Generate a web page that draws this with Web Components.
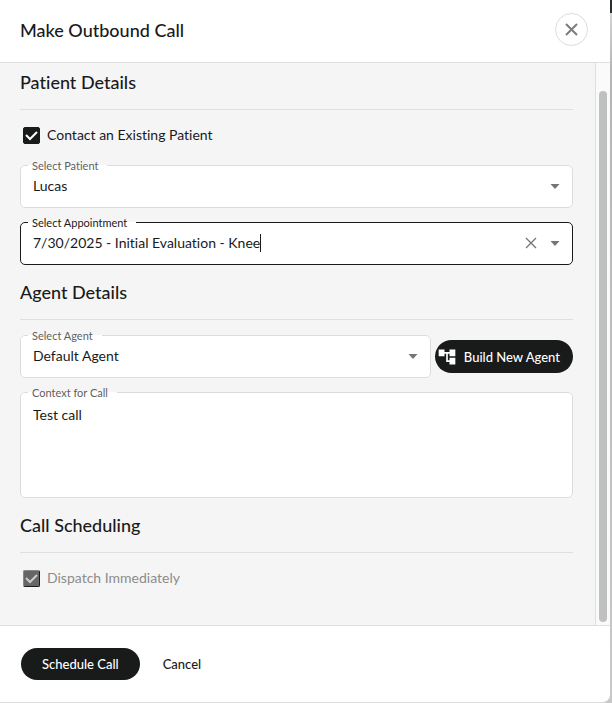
<!DOCTYPE html>
<html lang="en">
<head>
<meta charset="utf-8">
<meta name="viewport" content="width=device-width, initial-scale=1">
<title>Make Outbound Call</title>
<style>
    body {
        margin: 0;
        font-family: Lato, "Liberation Sans", sans-serif;
        font-size: 14px;
        font-variant-ligatures: none;
        color: #191a1a;
        background: linear-gradient(#2b2c2c 13px, #d4d4d4 13px, #b4b4b4 70px, #c8c8c8);
    }
</style>
</head>
<body>

<template id="dialog-template">
    <style>
        :host {
            display: flex;
            flex-direction: column;
            box-sizing: border-box;
            min-height: 100vh;
            margin-right: 2px;
            background: #fff;
            border-bottom: 1px solid #dcdcdc;
            border-radius: 0 0 8px 0;
        }
        header {
            display: flex;
            align-items: center;
            justify-content: space-between;
            padding: 13px 22px 16px 20px;
            border-bottom: 1px solid #dfdfdf;
        }
        h1 {
            margin: 0;
            font-size: 18px;
            line-height: 24px;
            font-weight: 500;
        }
        .close {
            display: grid;
            place-items: center;
            width: 33px;
            height: 33px;
            padding: 0;
            border: 1px solid #dcdcdc;
            border-radius: 50%;
            background: #fff;
            color: #7c7c7c;
        }
        .body {
            flex: 1;
            display: grid;
            grid-template-columns: 1fr 15px;
            background: #f5f5f5;
        }
        main {
            display: flex;
            flex-direction: column;
            gap: 15px;
            padding: 7px 22px 31px 20px;
            min-width: 0;
        }
        .track {
            display: flex;
            justify-content: center;
            padding: 28px 0 3px;
            background: #fafafa;
            border-left: 1px solid #dfdfdf;
        }
        .thumb {
            width: 8px;
            border-radius: 4px;
            background: #bfc0c0;
        }
        footer {
            display: flex;
            gap: 2px;
            padding: 22px 21px;
            border-top: 1px solid #dfdfdf;
        }
    </style>
    <header>
        <h1></h1>
        <button class="close" type="button" aria-label="Close">
            <svg width="13" height="13" viewBox="0 0 13 13" fill="none" stroke="currentColor" stroke-width="2"><path d="M1 1l11 11M12 1L1 12"/></svg>
        </button>
    </header>
    <div class="body">
        <main><slot></slot></main>
        <div class="track"><div class="thumb"></div></div>
    </div>
    <footer><slot name="actions"></slot></footer>
</template>

<template id="section-template">
    <style>
        :host {
            display: flex;
            flex-direction: column;
            gap: 8px;
        }
        h2 {
            margin: 0 0 1px;
            padding-bottom: 15px;
            border-bottom: 1px solid #dfdfdf;
            font-size: 18px;
            line-height: 24px;
            font-weight: 500;
        }
    </style>
    <h2></h2>
    <slot></slot>
</template>

<template id="check-template">
    <style>
        :host {
            display: flex;
            align-items: center;
            gap: 7px;
            height: 32px;
            padding-left: 3px;
        }
        .box {
            display: grid;
        }
        input, svg {
            grid-area: 1 / 1;
            width: 17px;
            height: 17px;
        }
        input {
            appearance: none;
            margin: 0;
            border: 1px solid #191a1a;
            border-radius: 2px;
            background: #fff;
        }
        input:checked {
            background: #191a1a;
        }
        input:disabled {
            border-color: #888 #191a1a #191a1a #888;
            background: #666;
        }
        svg {
            pointer-events: none;
            color: #fff;
        }
        input:not(:checked) + svg {
            visibility: hidden;
        }
        input:disabled + svg {
            color: #ccc;
        }
        label {
            line-height: 20px;
        }
        :host([disabled]) label {
            color: #8c8c8c;
        }
    </style>
    <span class="box">
        <input id="check" type="checkbox">
        <svg viewBox="0 0 17 17" fill="none" stroke="currentColor" stroke-width="2"><path d="M3 8l4 4L14 5"/></svg>
    </span>
    <label for="check"></label>
</template>

<template id="field-template">
    <style>
        :host {
            display: block;
            min-width: 0;
            --line: #dcdcdc;
        }
        :host([active]) {
            --line: #191a1a;
        }
        fieldset {
            display: block;
            min-width: 0;
            margin: 0;
            padding: 0 5px 0 12px;
            border: 1px solid var(--line);
            border-radius: 5px;
            background: #fff;
        }
        legend {
            margin-left: -5px;
            padding: 0 9px 0 4px;
            font-size: 11px;
            line-height: 13px;
            color: #5f6060;
        }
        :host([active]) legend {
            color: #191a1a;
        }
        .row {
            display: grid;
            align-items: center;
            grid-template-columns: 1fr auto;
            padding: 2px 0 9px;
        }
        .row.combo {
            grid-template-columns: auto 1px 1fr auto auto;
        }
        .row.textarea {
            padding: 0;
        }
        select, input, textarea {
            display: block;
            box-sizing: border-box;
            width: 100%;
            margin: 0;
            padding: 0;
            border: 0;
            outline: 0;
            appearance: none;
            background: none;
            font: inherit;
            line-height: 20px;
            color: inherit;
        }
        select {
            grid-area: 1 / 1 / 2 / 3;
        }
        select + svg {
            grid-area: 1 / 2;
            pointer-events: none;
        }
        input {
            field-sizing: content;
            width: auto;
        }
        textarea {
            height: 98px;
            padding-top: 6px;
            resize: none;
        }
        .caret {
            height: 18px;
            background: #191a1a;
        }
        button {
            display: grid;
            place-items: center;
            padding: 0;
            border: 0;
            background: none;
            color: #747575;
        }
        .clear {
            grid-column: 4;
            width: 24px;
            height: 24px;
        }
        .arrow {
            width: 24px;
            height: 24px;
            color: #747575;
        }
    </style>
    <fieldset>
        <legend><label for="control"></label></legend>
        <div class="row"></div>
    </fieldset>
</template>

<template id="button-template">
    <style>
        :host {
            display: block;
            flex: none;
        }
        button {
            display: flex;
            align-items: center;
            gap: 7px;
            height: 32px;
            padding: 0 21px;
            border: 0;
            border-radius: 17px;
            background: #191a1a;
            color: #fff;
            font: inherit;
            font-size: 13px;
            font-weight: 500;
            white-space: nowrap;
        }
        :host([variant="text"]) button {
            background: none;
            color: #191a1a;
        }
        :host([variant="icon"]) button {
            height: 33px;
            padding: 0 13px 0 2px;
        }
    </style>
    <button type="button"><slot name="icon"></slot><slot></slot></button>
</template>

<template id="row-template">
    <style>
        :host {
            display: grid;
            grid-template-columns: 1fr auto;
            align-items: end;
            gap: 4px;
        }
        .side {
            padding-bottom: 5px;
        }
    </style>
    <slot></slot>
    <div class="side"><slot name="side"></slot></div>
</template>

<call-dialog heading="Make Outbound Call">
    <form-section heading="Patient Details">
        <check-field label="Contact an Existing Patient" checked></check-field>
        <outlined-field label="Select Patient" value="Lucas"></outlined-field>
        <outlined-field label="Select Appointment" type="combo" value="7/30/2025 - Initial Evaluation - Knee" active></outlined-field>
    </form-section>
    <form-section heading="Agent Details">
        <field-row>
            <outlined-field label="Select Agent" value="Default Agent"></outlined-field>
            <pill-button slot="side" variant="icon">
                <svg slot="icon" width="20" height="20" viewBox="0 0 24 24" fill="currentColor"><path d="M22 11V3h-7v3H9V3H2v8h7V8h2v10h4v3h7v-8h-7v3h-2V8h2v3z"/></svg>Build New Agent</pill-button>
        </field-row>
        <outlined-field label="Context for Call" type="textarea" value="Test call"></outlined-field>
    </form-section>
    <form-section heading="Call Scheduling">
        <check-field label="Dispatch Immediately" checked disabled></check-field>
    </form-section>
    <pill-button slot="actions">Schedule Call</pill-button>
    <pill-button slot="actions" variant="text">Cancel</pill-button>
</call-dialog>

<script>
    class TemplateElement extends HTMLElement {
        constructor(id) {
            super()
            this.attachShadow({ mode: "open" })
            const template = document.querySelector(id)
            this.shadowRoot.appendChild(template.content.cloneNode(true))
        }
        find(selector) {
            return this.shadowRoot.querySelector(selector)
        }
    }

    customElements.define("call-dialog",
        class CallDialog extends TemplateElement {
            constructor() {
                super("#dialog-template")
            }
            connectedCallback() {
                this.find("h1").textContent = this.getAttribute("heading")
                this.find(".close").addEventListener("click", () => {
                    this.dispatchEvent(new Event("close"))
                })
            }
        }
    )

    customElements.define("form-section",
        class FormSection extends TemplateElement {
            constructor() {
                super("#section-template")
            }
            connectedCallback() {
                this.find("h2").textContent = this.getAttribute("heading")
            }
        }
    )

    customElements.define("field-row",
        class FieldRow extends TemplateElement {
            constructor() {
                super("#row-template")
            }
        }
    )

    customElements.define("check-field",
        class CheckField extends TemplateElement {
            constructor() {
                super("#check-template")
            }
            connectedCallback() {
                const input = this.find("input")
                input.checked = this.hasAttribute("checked")
                input.disabled = this.hasAttribute("disabled")
                this.find("label").textContent = this.getAttribute("label")
            }
        }
    )

    const arrow = `<svg class="arrow" viewBox="0 0 24 24" fill="currentColor"><path d="M7.500 10h9L12 15z"/></svg>`

    const controls = {
        select: `<select id="control"><option></option></select>${arrow}`,
        combo: `
            <input id="control" type="text" autocomplete="off">
            <span class="caret"></span>
            <button class="clear" type="button" aria-label="Clear">
                <svg width="12" height="12" viewBox="0 0 12 12" fill="none" stroke="currentColor" stroke-width="1.300"><path d="M1 1l10 10M11 1L1 11"/></svg>
            </button>
            <button class="open" type="button" aria-label="Open">${arrow}</button>`,
        textarea: `<textarea id="control"></textarea>`
    }

    customElements.define("outlined-field",
        class OutlinedField extends TemplateElement {
            constructor() {
                super("#field-template")
            }
            connectedCallback() {
                const type = this.getAttribute("type") || "select"
                const value = this.getAttribute("value")
                const row = this.find(".row")
                row.innerHTML = controls[type]
                row.classList.add(type)
                this.find("label").textContent = this.getAttribute("label")

                if (type === "select") {
                    this.find("option").textContent = value
                } else {
                    this.find("#control").value = value
                }
                if (type === "combo") {
                    this.find(".clear").addEventListener("click", () => {
                        this.find("#control").value = ""
                    })
                }
            }
        }
    )

    customElements.define("pill-button",
        class PillButton extends TemplateElement {
            constructor() {
                super("#button-template")
            }
        }
    )
</script>
</body>
</html>
